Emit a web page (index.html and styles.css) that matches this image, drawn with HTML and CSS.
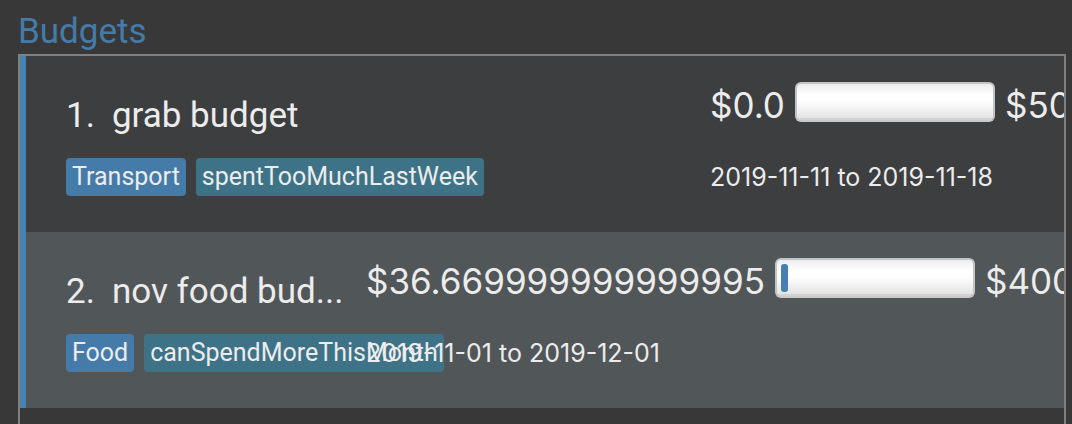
FILE: index.html
```
<!DOCTYPE html>
<html lang="en">
<head>
<meta charset="utf-8">
<title>Budgets</title>
<link rel="stylesheet" href="styles.css">
</head>
<body>
<main class="panel">
  <h1 class="panel-title">Budgets</h1>
  <ul class="budget-list">
    <li class="card">
      <div class="summary">
        <h2 class="name"><span>1.</span><span>grab budget</span></h2>
        <div class="tags"><span class="tag category">Transport</span><span class="tag">spentTooMuchLastWeek</span></div>
      </div>
      <div class="figures">
        <div class="spending">
          <span>$0.0</span>
          <progress class="meter" value="0" max="188" aria-label="grab budget spent"></progress>
          <span>$50</span>
        </div>
        <p class="period">2019-11-11 to 2019-11-18</p>
      </div>
    </li>
    <li class="card card-alt">
      <div class="summary">
        <h2 class="name"><span>2.</span><span>nov food bud...</span></h2>
        <div class="tags"><span class="tag category">Food</span><span class="tag">canSpendMoreThisMonth</span></div>
      </div>
      <div class="figures figures-wide">
        <div class="spending">
          <span>$36.669999999999995</span>
          <progress class="meter" value="7" max="188" aria-label="nov food budget spent"></progress>
          <span>$400</span>
        </div>
        <p class="period">2019-11-01 to 2019-12-01</p>
      </div>
    </li>
  </ul>
</main>
</body>
</html>
```
FILE: styles.css
```
* { box-sizing: border-box; }
body {
  margin: 0;
  background: #383838;
  color: #ececec;
  font-family: Roboto, "Liberation Sans", sans-serif;
}
.panel {
  display: flex;
  flex-direction: column;
  height: 100vh;
  padding: 10px 6px 0 18px;
  overflow: hidden;
}
.panel-title {
  margin: 0;
  color: #457ba9;
  font-size: 35px;
  font-weight: 400;
  line-height: 44px;
}
.budget-list {
  flex: 1;
  min-height: 0;
  margin: 0;
  padding: 0;
  list-style: none;
  border: 2px solid #808080;
  border-bottom: 0;
  overflow: hidden;
}
.card {
  display: flex;
  height: 176px;
  padding-left: 40px;
  border-left: 6px solid #4682b4;
  background: #3c3e3f;
  overflow: hidden;
  white-space: nowrap;
}
.card-alt { background: #515658; }
.summary {
  flex: 1;
  min-width: 0;
  padding-top: 38px;
}
.name {
  display: flex;
  gap: 17px;
  margin: 0;
  font-size: 35px;
  font-weight: 400;
  line-height: 44px;
}
.tags {
  display: flex;
  gap: 10px;
  margin-top: 20px;
}
.tag {
  padding: 0 6px;
  border-radius: 4px;
  background: #3e7387;
  font-size: 25px;
  line-height: 38px;
}
.category { background: #457ba9; }
.figures {
  flex: none;
  position: relative;
  width: 354px;
  padding-top: 26px;
  font-family: Inter, "Liberation Sans", sans-serif;
}
.figures-wide { width: 698px; }
.spending {
  display: flex;
  align-items: flex-end;
  gap: 10px;
  font-size: 35px;
  line-height: 34px;
}
.meter {
  appearance: none;
  flex: none;
  width: 200px;
  height: 40px;
  padding: 4px;
  border: 2px solid #c4c4c4;
  border-bottom-color: #cacaca;
  border-radius: 6px;
  background: linear-gradient(#ededed, #ffffff 30%, #fdfdfd 50%, #e4e4e4 94%, #d2d2d2 95%);
}
.meter::-webkit-progress-bar { background: transparent; }
.meter::-webkit-progress-value {
  border-radius: 3px;
  background: #4580b0;
}
.period {
  margin: 36px 0 0;
  font-size: 25px;
  line-height: 38px;
}
```
